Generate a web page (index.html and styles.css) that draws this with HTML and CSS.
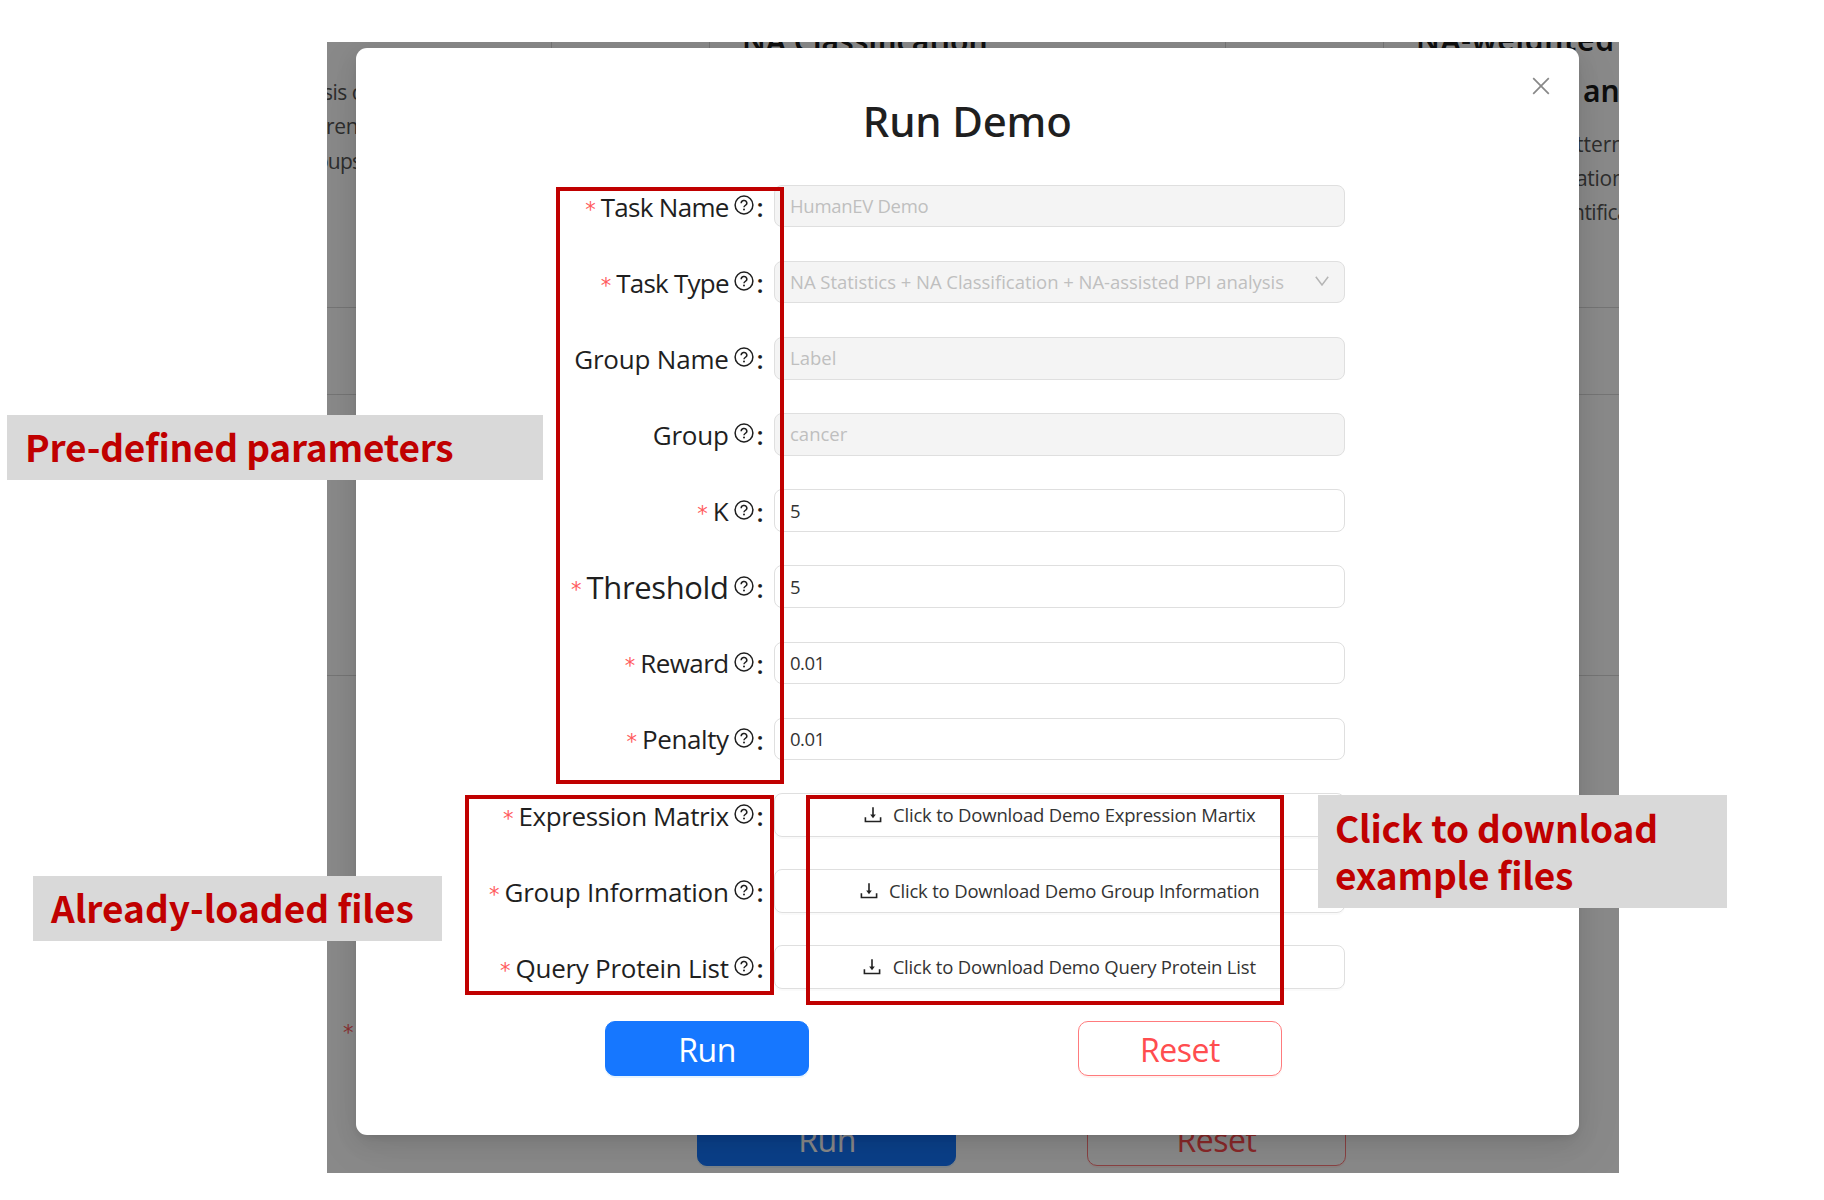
FILE: index.html
```html
<!DOCTYPE html>
<html lang="en">
<head>
<meta charset="utf-8">
<title>Run Demo</title>
<link rel="stylesheet" href="styles.css">
</head>
<body>
<svg width="0" height="0" class="defs" aria-hidden="true">
  <symbol id="help" viewBox="0 0 20 20"><circle cx="10" cy="10" r="8.900" fill="none" stroke="currentColor" stroke-width="1.5"/><path d="M7.200 8.200a2.800 2.600 0 1 1 4.200 2.100c-.9.5-1.400.9-1.400 1.900" fill="none" stroke="currentColor" stroke-width="1.5"/><circle cx="10" cy="14.400" r="1" fill="currentColor"/></symbol>
  <symbol id="download" viewBox="0 0 18 18"><path d="M1.400 11.200v4.300h15.200v-4.300M9 1.200v9" fill="none" stroke="currentColor" stroke-width="1.600"/><path d="M6.200 8.600h5.600L9 12.200z" fill="currentColor"/></symbol>
</svg>
<div class="stage">
  <div class="shot">
    <div class="page">
      <div class="cards">
        <section class="card card-first"><p class="l1">sis of</p><p class="l2">rence</p><p class="l3">oups</p></section>
        <section class="card"><h3 class="h-class">NA Classification</h3></section>
        <section class="card card-last"><h3 class="h-weight">NA-weighted</h3><h3 class="h-and">and</h3><p class="r1">tterns</p><p class="r2">ation</p><p class="r3">ntification</p></section>
      </div>
      <div class="band band-a"></div>
      <div class="band band-b"></div>
      <div class="band band-c"><i class="star">*</i></div>
      <div class="page-actions"><button class="btn primary">Run</button><button class="btn danger">Reset</button></div>
    </div>
    <div class="mask"></div>
    <div class="modal">
      <svg class="close" viewBox="0 0 18 18"><path d="M1.200 1.200l15.600 15.600M16.800 1.200L1.200 16.800" fill="none" stroke="currentColor" stroke-width="1.700"/></svg>
      <h1>Run Demo</h1>
      <div class="form">
        <div class="row"><label><i class="star">*</i><span class="t-taskname">Task Name</span><svg class="help"><use href="#help"/></svg><b>:</b></label><div class="input off"><span class="v-name">HumanEV Demo</span></div></div>
        <div class="row"><label><i class="star">*</i><span class="t-tasktype">Task Type</span><svg class="help"><use href="#help"/></svg><b>:</b></label><div class="input off"><span class="v-type">NA Statistics + NA Classification + NA-assisted PPI analysis</span><svg class="chev" viewBox="0 0 14 10"><path d="M.8.8L7 9 13.200 .8" fill="none" stroke="currentColor" stroke-width="1.500"/></svg></div></div>
        <div class="row"><label><span class="t-groupname">Group Name</span><svg class="help"><use href="#help"/></svg><b>:</b></label><div class="input off">Label</div></div>
        <div class="row"><label><span class="t-group">Group</span><svg class="help"><use href="#help"/></svg><b>:</b></label><div class="input off">cancer</div></div>
        <div class="row"><label><i class="star">*</i><span>K</span><svg class="help"><use href="#help"/></svg><b>:</b></label><div class="input num">5</div></div>
        <div class="row"><label><i class="star">*</i><span class="t-threshold">Threshold</span><svg class="help"><use href="#help"/></svg><b>:</b></label><div class="input num">5</div></div>
        <div class="row"><label><i class="star">*</i><span class="t-reward">Reward</span><svg class="help"><use href="#help"/></svg><b>:</b></label><div class="input num">0.01</div></div>
        <div class="row"><label><i class="star">*</i><span class="t-penalty">Penalty</span><svg class="help"><use href="#help"/></svg><b>:</b></label><div class="input num">0.01</div></div>
        <div class="row"><label><i class="star">*</i><span class="t-matrix">Expression Matrix</span><svg class="help"><use href="#help"/></svg><b>:</b></label><div class="input file"><svg class="dl"><use href="#download"/></svg><span>Click to Download Demo Expression Martix</span></div></div>
        <div class="row"><label><i class="star">*</i><span class="t-info">Group Information</span><svg class="help"><use href="#help"/></svg><b>:</b></label><div class="input file"><svg class="dl"><use href="#download"/></svg><span>Click to Download Demo Group Information</span></div></div>
        <div class="row"><label><i class="star">*</i><span class="t-query">Query Protein List</span><svg class="help"><use href="#help"/></svg><b>:</b></label><div class="input file"><svg class="dl"><use href="#download"/></svg><span>Click to Download Demo Query Protein List</span></div></div>
      </div>
      <div class="actions"><button class="btn primary">Run</button><button class="btn danger">Reset</button></div>
    </div>
  </div>
  <div class="frame f-params"></div>
  <div class="frame f-files"></div>
  <div class="frame f-download"></div>
  <div class="note n-params">Pre-defined parameters</div>
  <div class="note n-files">Already-loaded files</div>
  <div class="note n-download">Click to download<br>example files</div>
</div>
</body>
</html>
```
FILE: styles.css
```css
*{box-sizing:border-box}
body{margin:0;background:#fff;color:#1f1f1f;font-family:"Open Sans","Noto Sans",sans-serif}
h1,h3,p{margin:0}
.defs{position:absolute}
.stage{position:relative;width:1824px;height:1200px;overflow:hidden;padding:42px 0 0 327px}
.shot{position:relative;width:1292px;height:1131px;overflow:hidden;background:#fff}

/* page under the dialog */
.page{height:1131px;display:flex;flex-direction:column;font-size:21px}
.cards{height:266px;flex:none;display:grid;grid-template-columns:225px 517px 300px;column-gap:157px;border-bottom:1px solid #d9d9d9}
.card{border:solid #d9d9d9;border-width:0 1px;height:200px;white-space:nowrap;overflow:hidden}
.card-first{border-left:0}
.card-last{border-right:0}
.card h3{font:600 30px/51.500px "Noto Sans",sans-serif;color:#1c1c1c;height:51.500px}
.card p{line-height:34.300px;height:34.300px;color:#555}
.card-first{padding-top:33px}
.l1{margin-left:-4px;letter-spacing:-.5px}
.l2{margin-left:-1px;letter-spacing:-.3px}
.l3{margin-left:-11px;letter-spacing:-.8px}
.h-class{padding-left:32px;margin-top:-27px}
.card-last{overflow:visible;height:220px}
.h-weight{padding-left:32px;margin-top:-28px;letter-spacing:.7px}
.card .h-and{padding-left:199px;height:62px;margin-top:-1px}
.r1{padding-left:192px}
.r2{padding-left:192px;letter-spacing:-.3px}
.r3{padding-left:188px;letter-spacing:-.5px}
.band{flex:none;border-bottom:1px solid #d9d9d9}
.band-a{height:87px}
.band-b{height:281px}
.band-c{height:435px;border:0;padding:342px 0 0 16px}
.page-actions{display:flex;padding-left:370px;gap:130.500px}
.page-actions .btn{width:259px;height:54.500px}
.mask{position:absolute;inset:0;background:rgba(0,0,0,.46)}

/* dialog */
.modal{position:absolute;left:28.500px;top:6px;width:1223.500px;height:1087px;background:#fff;border-radius:11px;box-shadow:0 8px 22px rgba(0,0,0,.1),0 4px 8px -5px rgba(0,0,0,.14),0 12px 60px 10px rgba(0,0,0,.05);display:flex;flex-direction:column}
.close{position:absolute;right:29.500px;top:29px;width:18px;height:18px;color:#888}
h1{font:500 42px/60px "Noto Sans",sans-serif;letter-spacing:-.2px;text-align:center;margin-top:43px;height:77px;flex:none}
.form{flex:none}
.row{height:76.130px;display:grid;grid-template-columns:406px 571px;column-gap:12.500px;align-items:center}
label{display:flex;align-items:center;justify-content:flex-end;font-size:26px;line-height:40px;padding-top:1px}
.star{font:normal 21px/20px "DejaVu Sans",sans-serif;color:#ff5c5e;height:20px;padding-top:3px;margin-right:5px;width:10.500px}
.help{width:20px;height:20px;margin:-3px 0 0 5.300px;flex:none}
label b{font-weight:600;font-size:26px;width:4px;margin:0 1px 0 2.500px;padding-top:1px}
.t-taskname{letter-spacing:-.7px}
.t-tasktype{letter-spacing:-.78px}
.t-groupname,.t-group{letter-spacing:-.2px}
.t-threshold{font-size:31px;letter-spacing:-.36px}
.t-reward{letter-spacing:-.55px}
.t-penalty{letter-spacing:-.4px}
.t-matrix{letter-spacing:-.38px}
.t-info{letter-spacing:-.22px}
.t-query{letter-spacing:-.27px}
.input{height:42.500px;border:1px solid #dfdfdf;border-radius:8px;padding:0 15px 1px;display:flex;align-items:center;font-size:18.500px;color:#333;white-space:nowrap}
.off{background:#f4f4f4;color:#bfbfbf}
.num{letter-spacing:-.5px}
.v-name{letter-spacing:-.3px}
.v-type{letter-spacing:-.04px}
.chev{width:14px;height:10px;margin-left:auto;margin-top:-1px;color:#b5b5b5}
.file{height:44px;justify-content:center;letter-spacing:-.2px;box-shadow:0 2px 0 rgba(0,0,0,.02)}
.dl{width:18px;height:18px;margin-right:11.500px;color:#222}
.actions{display:flex;gap:269px;padding:15.800px 0 0 249px}
.btn{width:204px;height:55px;padding:2px 0 0 1px;border-radius:10px;font:400 32px/51px "Open Sans",sans-serif;letter-spacing:-.5px}
.primary{background:#1677ff;border:1px solid #1677ff;color:#fff;box-shadow:0 2px 0 rgba(5,145,255,.1)}
.danger{background:#fff;border:1px solid #ff7b7d;color:#ff4d4f;box-shadow:0 2px 0 rgba(255,38,5,.06)}

/* annotations drawn over the capture */
.frame{position:absolute;border:4px solid #c00000}
.f-params{left:556px;top:187px;width:228px;height:597px}
.f-files{left:465px;top:795px;width:309px;height:200px}
.f-download{left:806px;top:795px;width:478px;height:210px}
.note{position:absolute;background:#d9d9d9;color:#c00000;font:700 37px/47px "Noto Sans CJK SC",sans-serif;letter-spacing:-.2px;white-space:nowrap;padding-top:8px}
.n-params{left:7px;top:415px;width:536px;height:65px;padding-left:18px}
.n-files{left:33px;top:876px;width:409px;height:65px;padding-left:18px;letter-spacing:0}
.n-download{left:1318px;top:795px;width:409px;height:113px;padding-left:17px;padding-top:9px}
```
